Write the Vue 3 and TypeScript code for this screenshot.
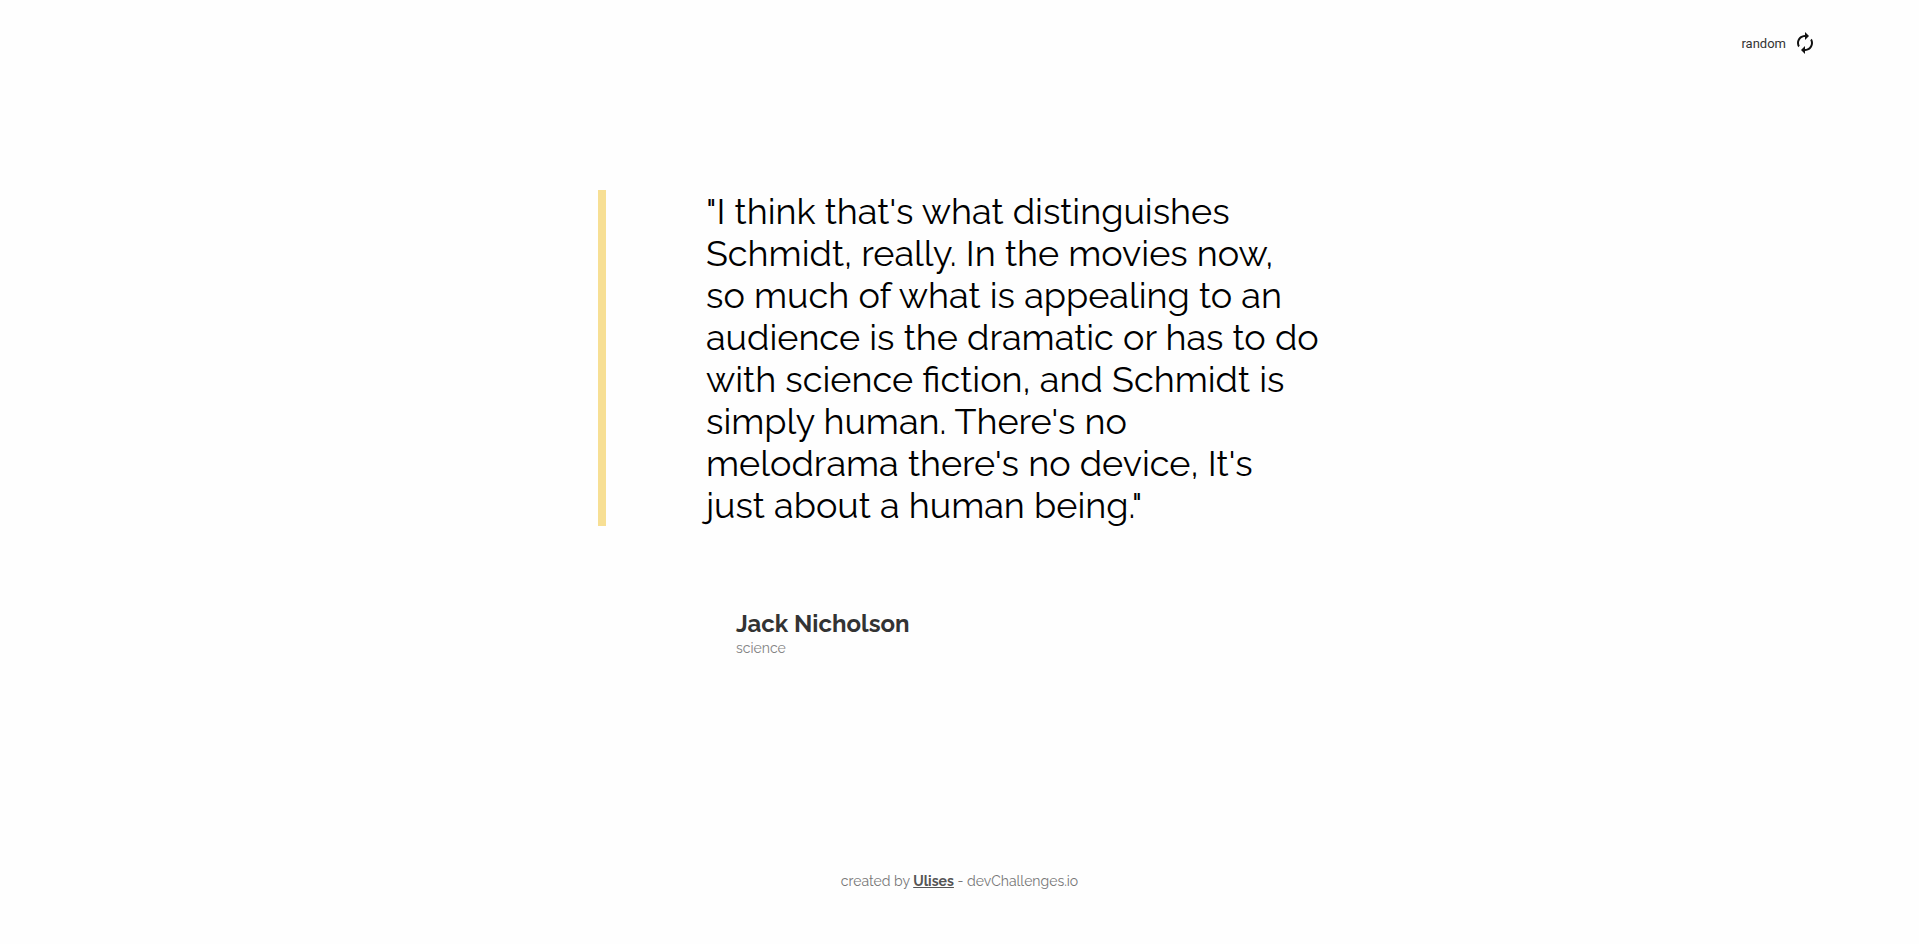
<script setup lang="ts">
import { ref } from 'vue'

interface Quote {
  lines: string[]
  author: string
  genre: string
}

const quotes: Quote[] = [
  {
    lines: [
      '"I think that\'s what distinguishes',
      'Schmidt, really. In the movies now,',
      'so much of what is appealing to an',
      'audience is the dramatic or has to do',
      'with science fiction, and Schmidt is',
      "simply human. There's no",
      "melodrama there's no device, It's",
      'just about a human being."',
    ],
    author: 'Jack Nicholson',
    genre: 'science',
  },
]

const index = ref(0)

function randomQuote(): void {
  index.value = Math.floor(Math.random() * quotes.length)
}
</script>

<template>
  <div class="page">
    <header class="top">
      <button class="random" type="button" @click="randomQuote">
        <span>random</span>
        <svg class="icon" viewBox="0 0 24 24" aria-hidden="true">
          <path
            d="M12 6v3l4-4-4-4v3c-4.42 0-8 3.58-8 8 0 1.57.46 3.03 1.24 4.26L6.7 14.8c-.45-.83-.7-1.79-.7-2.8 0-3.31 2.69-6 6-6zm6.76 1.74L17.3 9.2c.44.84.7 1.79.7 2.8 0 3.31-2.69 6-6 6v-3l-4 4 4 4v-3c4.42 0 8-3.58 8-8 0-1.57-.46-3.03-1.24-4.26z"
          />
        </svg>
      </button>
    </header>

    <main class="content">
      <blockquote class="quote">
        <span v-for="line in quotes[index].lines" :key="line" class="line">{{ line }}</span>
      </blockquote>
      <div class="source">
        <h1 class="author">{{ quotes[index].author }}</h1>
        <p class="genre">{{ quotes[index].genre }}</p>
      </div>
    </main>

    <footer class="foot">
      created by <a class="link" href="#">Ulises</a> - devChallenges.io
    </footer>
  </div>
</template>

<style>
body {
  margin: 0;
  background: #fefefe;
}
</style>

<style scoped>
.page {
  display: flex;
  flex-direction: column;
  box-sizing: border-box;
  min-height: 100vh;
  font-family: Raleway, Lato, 'Open Sans', sans-serif;
}

.top {
  display: flex;
  justify-content: flex-end;
  padding: 31px 102px 0 24px;
}

.random {
  display: flex;
  align-items: flex-end;
  gap: 7px;
  padding: 0;
  border: 0;
  background: none;
  color: #333;
  font-family: Roboto, sans-serif;
  font-size: 13px;
  line-height: 22px;
  cursor: pointer;
}

.icon {
  width: 24px;
  height: 24px;
  fill: #111;
}

.content {
  align-self: center;
  width: 723px;
  max-width: 100%;
  margin-top: 135px;
}

.quote {
  margin: 0;
  padding-left: 100px;
  border-left: 8px solid #f7df94;
  color: #000;
  font-size: 36px;
  font-weight: 400;
  line-height: 42px;
}

.line {
  display: block;
  white-space: nowrap;
}

.source {
  margin: 84px 0 0 138px;
}

.author {
  margin: 0;
  color: #333;
  font-size: 24px;
  font-weight: 700;
  line-height: 28px;
}

.genre {
  margin: 0;
  color: #828282;
  font-size: 14px;
  line-height: 20px;
}

.foot {
  margin-top: auto;
  padding: 0 24px 54px;
  color: #777;
  font-size: 14px;
  line-height: 18px;
  text-align: center;
}

.link {
  color: #555;
  font-weight: 700;
  text-decoration: underline;
}
</style>
